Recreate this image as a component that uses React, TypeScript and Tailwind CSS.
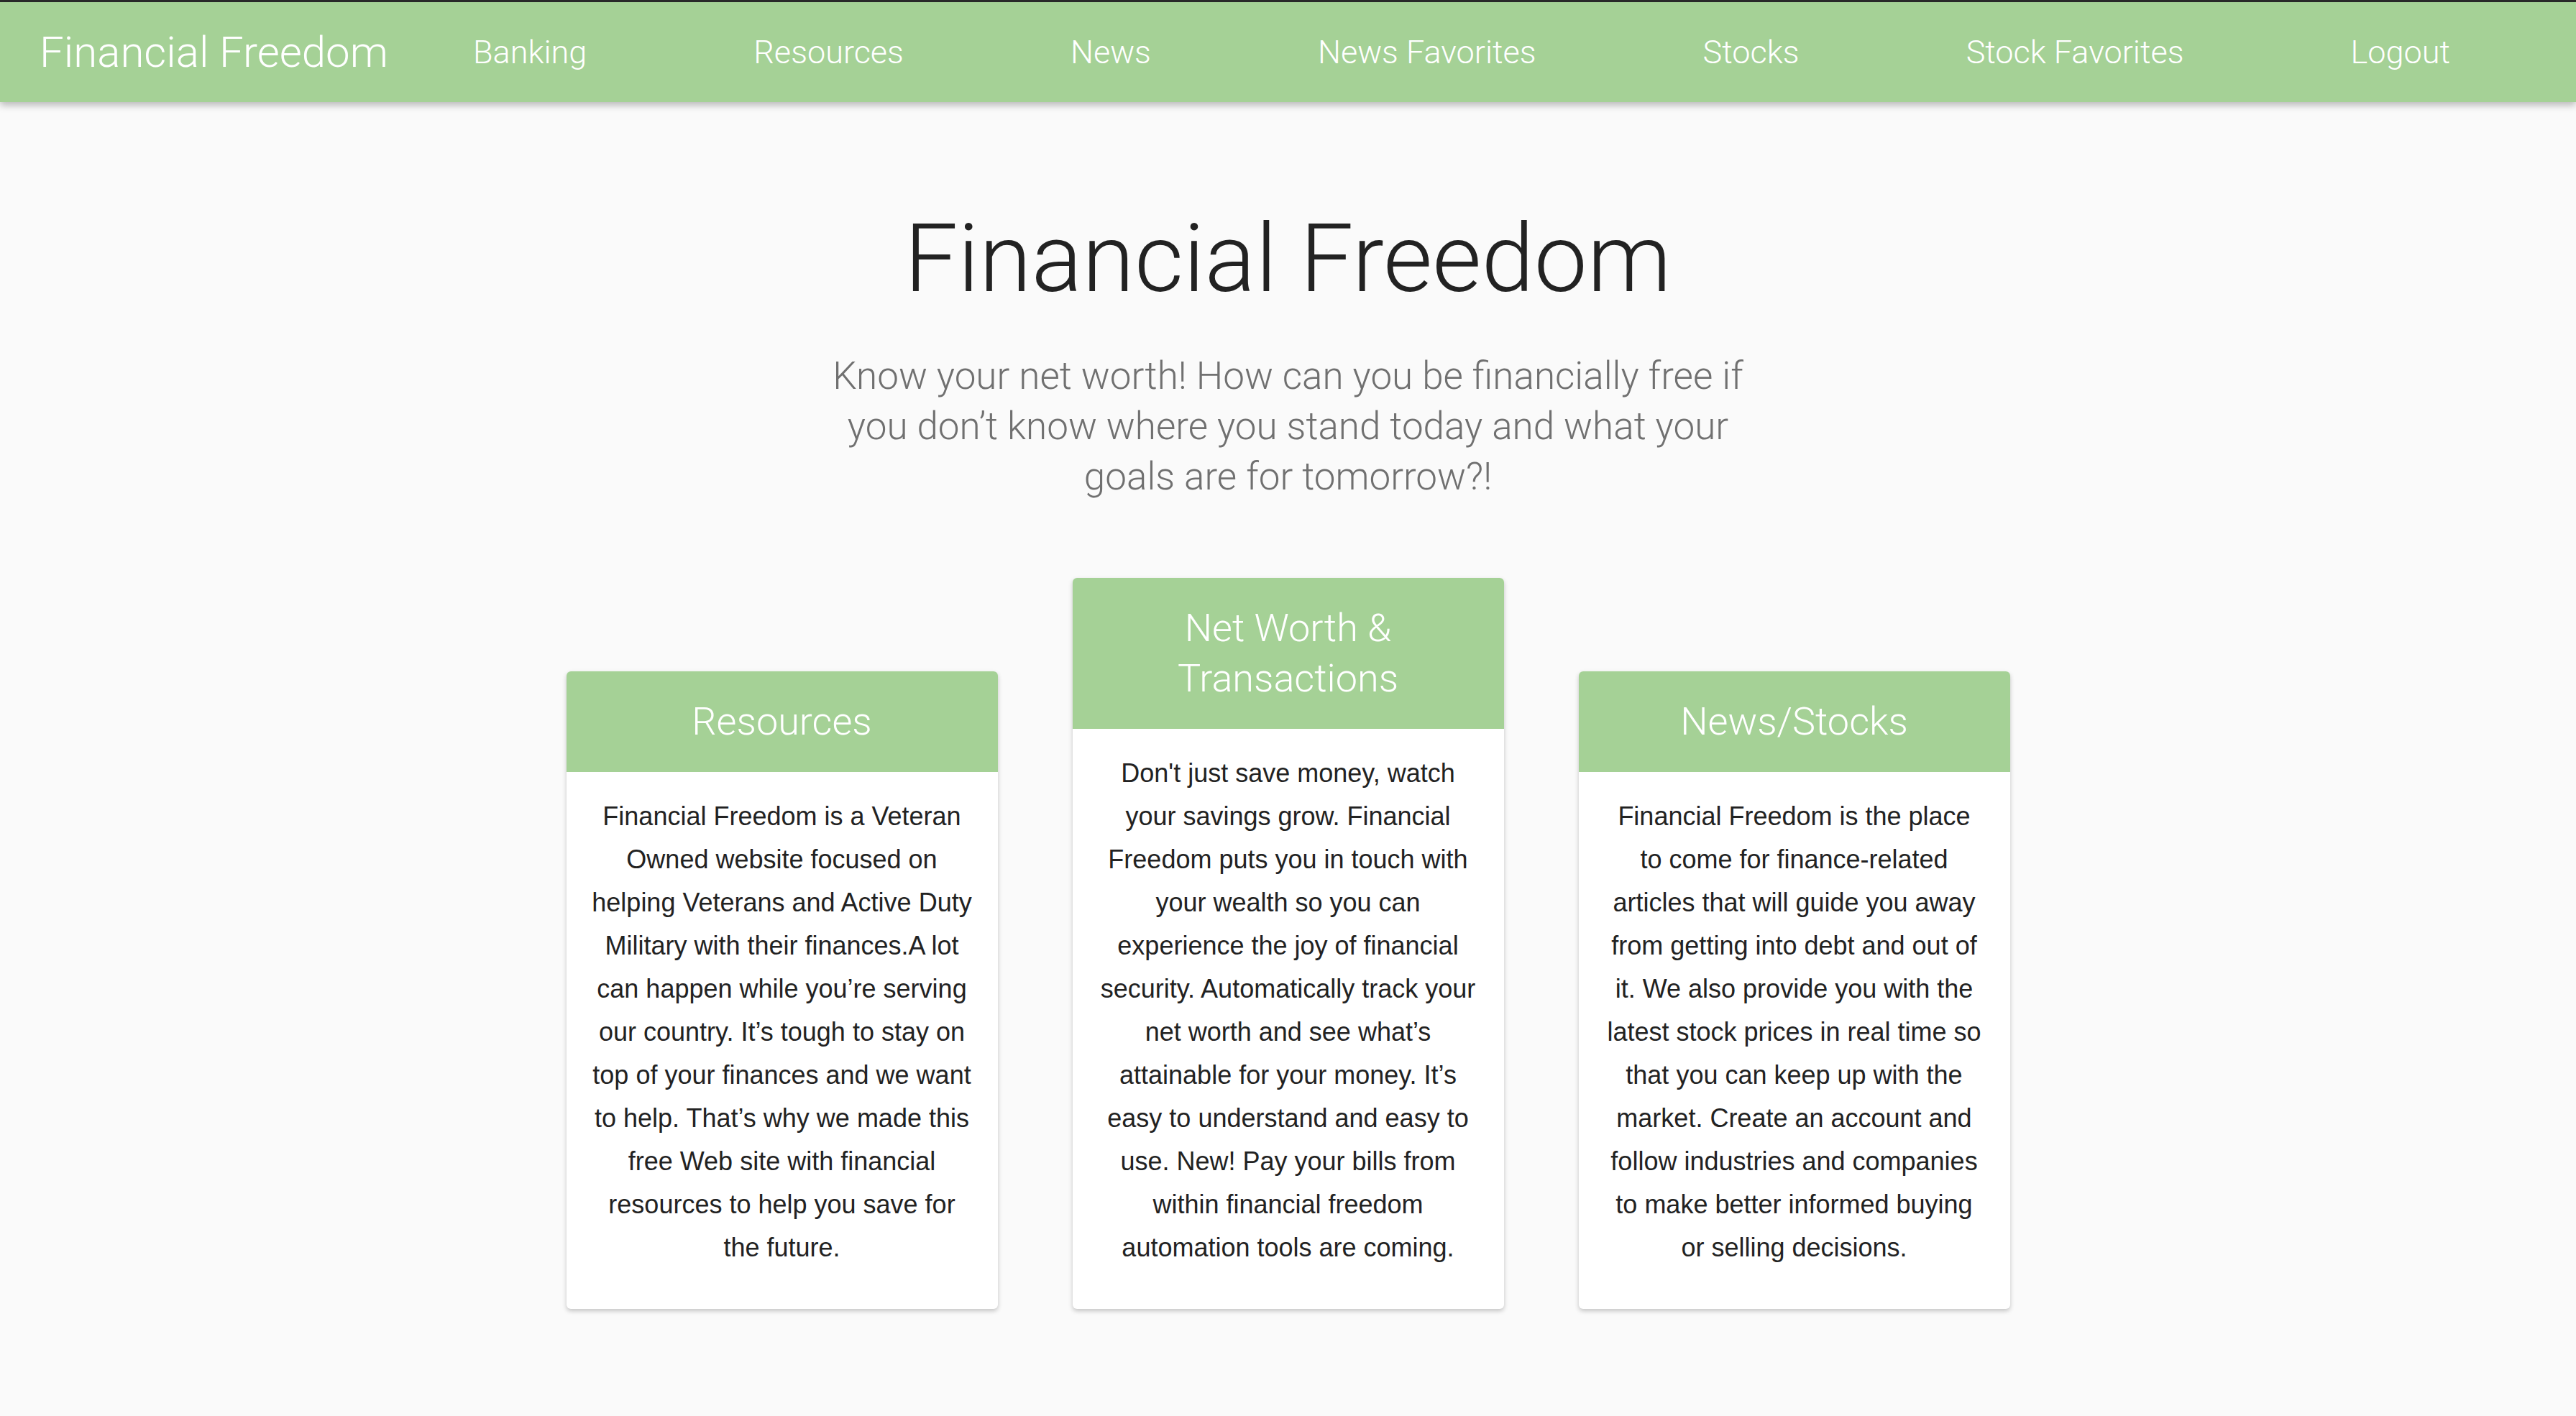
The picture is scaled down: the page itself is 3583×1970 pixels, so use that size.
import React from "react";

const links = ["Banking", "Resources", "News", "News Favorites", "Stocks", "Stock Favorites", "Logout"];

const cards = [
  {
    title: ["Resources"],
    lines: [
      "Financial Freedom is a Veteran",
      "Owned website focused on",
      "helping Veterans and Active Duty",
      "Military with their finances.A lot",
      "can happen while you’re serving",
      "our country. It’s tough to stay on",
      "top of your finances and we want",
      "to help. That’s why we made this",
      "free Web site with financial",
      "resources to help you save for",
      "the future.",
    ],
  },
  {
    title: ["Net Worth &", "Transactions"],
    lines: [
      "Don't just save money, watch",
      "your savings grow. Financial",
      "Freedom puts you in touch with",
      "your wealth so you can",
      "experience the joy of financial",
      "security. Automatically track your",
      "net worth and see what’s",
      "attainable for your money. It’s",
      "easy to understand and easy to",
      "use. New! Pay your bills from",
      "within financial freedom",
      "automation tools are coming.",
    ],
  },
  {
    title: ["News/Stocks"],
    lines: [
      "Financial Freedom is the place",
      "to come for finance-related",
      "articles that will guide you away",
      "from getting into debt and out of",
      "it. We also provide you with the",
      "latest stock prices in real time so",
      "that you can keep up with the",
      "market. Create an account and",
      "follow industries and companies",
      "to make better informed buying",
      "or selling decisions.",
    ],
  },
];

const Card = ({ title, lines }: { title: string[]; lines: string[] }) => {
  return (
    <div className="w-[600px] bg-white rounded-[6px] overflow-hidden shadow-[0_3px_6px_rgba(0,0,0,0.22)]">
      <div className="bg-[#a5d196] py-[35px] px-[30px] text-center text-white text-[54px] leading-[70px] font-light font-['Roboto',sans-serif]">
        {title.map((t) => (
          <span key={t} className="block">
            {t}
          </span>
        ))}
      </div>
      <div className="pt-[32px] pb-[55px] px-[20px] text-center text-[#222] text-[36px] leading-[60px] font-['Liberation_Sans',Arial,sans-serif]">
        {lines.map((l) => (
          <span key={l} className="block whitespace-nowrap">
            {l}
          </span>
        ))}
      </div>
    </div>
  );
};

const App = () => {
  return (
    <div className="min-h-[1970px] bg-[#fafafa] font-['Roboto',sans-serif]">
      <div className="h-[3px] bg-[#2b2b2b]" />
      <header className="relative z-10 h-[139px] bg-[#a5d196] flex items-center text-white font-light shadow-[0_4px_10px_rgba(0,0,0,0.28)]">
        <a className="pl-[55px] text-[60px] whitespace-nowrap">Financial Freedom</a>
        <nav className="flex ml-[2px]">
          {links.map((l) => (
            <a key={l} className="px-[116px] text-[45px] whitespace-nowrap">
              {l}
            </a>
          ))}
        </nav>
      </header>

      <main className="flex flex-col items-center">
        <h1 className="mt-[143px] text-[132px] leading-[150px] font-light text-[#222]">Financial Freedom</h1>
        <p className="mt-[53px] text-center text-[53px] leading-[70px] font-light text-[#707070]">
          <span className="block">Know your net worth! How can you be financially free if</span>
          <span className="block">you don’t know where you stand today and what your</span>
          <span className="block">goals are for tomorrow?!</span>
        </p>

        <div className="mt-[106px] flex items-end justify-center gap-[104px]">
          {cards.map((c) => (
            <Card key={c.title[0]} title={c.title} lines={c.lines} />
          ))}
        </div>
      </main>
    </div>
  );
};

export default App;
